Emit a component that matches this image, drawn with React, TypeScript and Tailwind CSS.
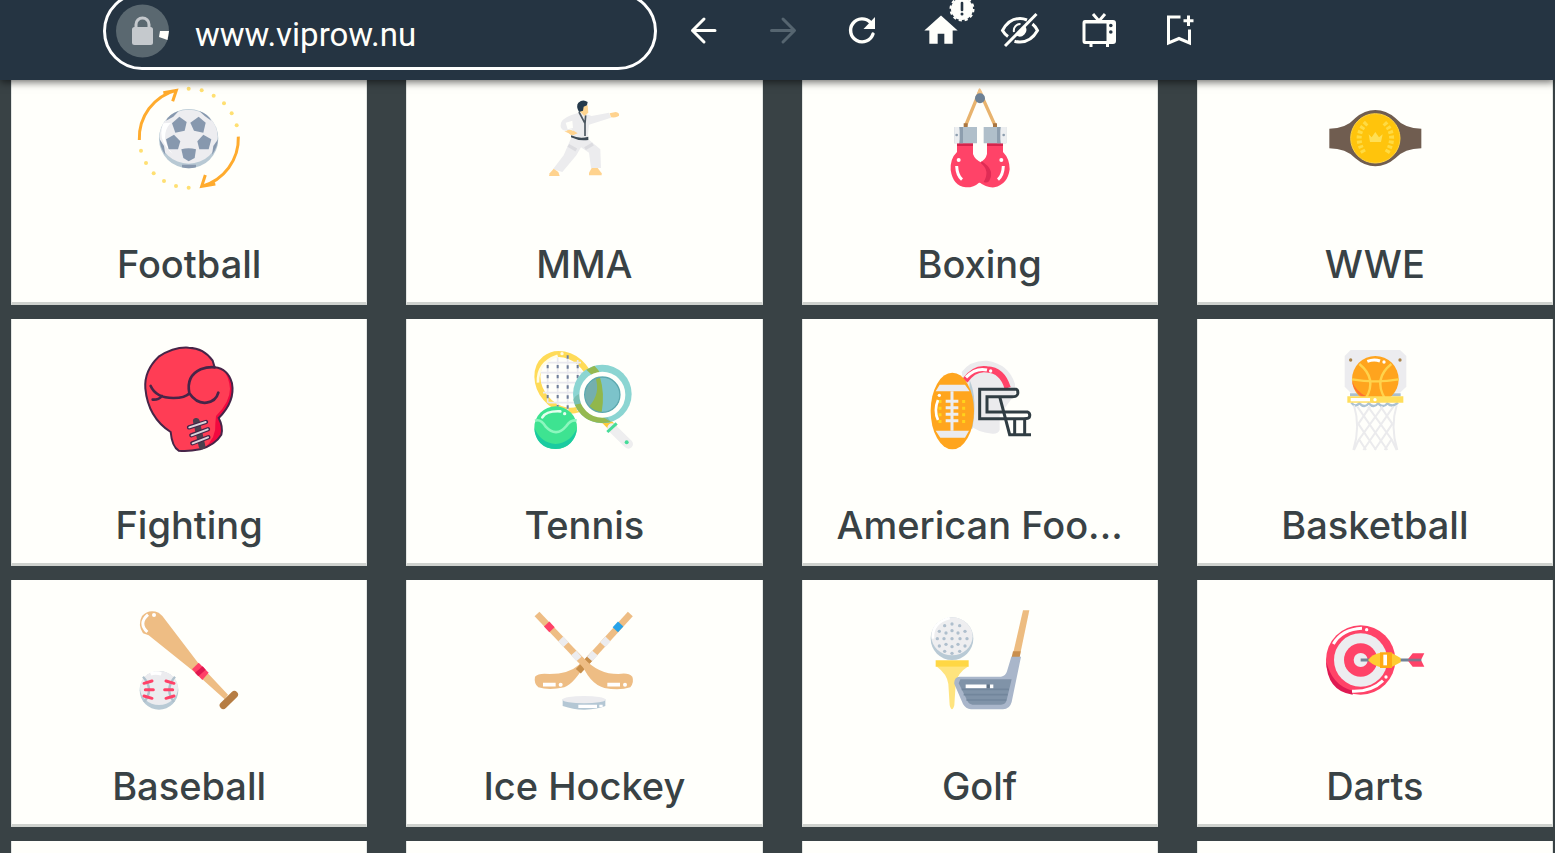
import type { ReactNode } from "react";

type Sport = {
  name: string;
  viewBox: string;
  art: ReactNode;
};

const footballArt = (
  <>
    <path d="M34 180A148 148 0 0 1 144 31M106 38L145 31L134 64" fill="none" stroke="#ffab2d" strokeWidth="9" />
    <path d="M331 170A149 149 0 0 1 221 319M262 312L221 319L232 285" fill="none" stroke="#ffab2d" strokeWidth="9" />
    <g fill="#ffe072">
      <circle cx="182" cy="26" r="6" />
      <circle cx="221" cy="31" r="6" />
      <circle cx="257" cy="47" r="6" />
      <circle cx="288" cy="70" r="6" />
      <circle cx="311" cy="100" r="6" />
      <circle cx="326" cy="136" r="6" />
      <circle cx="182" cy="323" r="6" />
      <circle cx="144" cy="318" r="6" />
      <circle cx="108" cy="303" r="6" />
      <circle cx="77" cy="280" r="6" />
      <circle cx="54" cy="249" r="6" />
      <circle cx="39" cy="212" r="6" />
    </g>
    <circle cx="182" cy="176" r="89" fill="#b8c9d4" />
    <ellipse cx="182" cy="170" rx="87" ry="81" fill="#ededf0" />
    <path d="M106 130Q94 160 106 186Q120 210 134 222Q106 190 112 160Q116 138 130 128Z" fill="#fff" />
    <g fill="#8798ae">
      <path d="M154 110L176 126L170 152L142 158L132 130Z" />
      <path d="M212 110L233 128L226 158L198 152L187 128Z" />
      <path d="M114 178L138 164L157 184L150 208L122 208Z" />
      <path d="M250 178L226 164L208 184L214 208L242 208Z" />
      <path d="M160 208Q182 202 204 208L200 234L182 244L166 234Z" />
      <path d="M114 122Q124 102 152 93L136 110Z" />
      <path d="M214 93Q240 102 250 122L230 108Z" />
      <path d="M95 178Q96 204 112 224L108 198Z" />
      <path d="M270 178Q268 204 252 224L256 198Z" />
      <path d="M162 254H204V262Q182 268 162 262Z" />
    </g>
  </>
);

const mmaArt = (
  <>
    <path d="M126 148L158 152L160 166L140 164Z" fill="#ffd590" />
    <path d="M166 98L186 102L204 108L256 98L262 113L196 134L192 174L146 170L144 148L126 152Q106 150 112 128Q118 110 166 98Z" fill="#ececee" />
    <path d="M126 128L132 148L148 144L146 122Z" fill="#fffffb" />
    <path d="M122 154L150 152L162 160L148 166Z" fill="#ffd38e" />
    <path d="M258 100L276 96Q288 98 286 106Q282 114 262 112Z" fill="#ffd38e" />
    <path d="M144 170L192 176L230 208L232 264H202L196 218L172 202L158 226L116 276L88 268L120 226Z" fill="#ececee" />
    <path d="M134 196L158 210M184 206L208 192" stroke="#dcdce0" strokeWidth="10" />
    <path d="M142 166Q168 178 194 170V180Q166 184 142 172Z" fill="#3d4a55" />
    <path d="M166 96L184 130V168M186 106L184 130" fill="none" stroke="#4c5760" strokeWidth="5" />
    <path d="M172 80L192 76L194 98L182 108L168 94Z" fill="#ffd590" />
    <path d="M166 96Q156 78 164 68Q178 56 192 66L190 76L180 80L178 92Z" fill="#253a4b" />
    <path d="M90 266L104 276L108 288H76L78 280Z" fill="#ffd38e" />
    <path d="M204 264H222L234 280V286H196V278Z" fill="#ffd38e" />
  </>
);

const boxingArt = (
  <>
    <path d="M142 136L184 34L230 136" fill="none" stroke="#e8b36e" strokeWidth="10" strokeLinejoin="round" />
    <path d="M180 40L184 28L190 40Z" fill="#f0c186" stroke="#f0c186" strokeWidth="6" strokeLinejoin="round" />
    <circle cx="185" cy="55" r="15" fill="#6d8196" />
    <path d="M136 130H148V144H136ZM224 130H236V144H224Z" fill="#a97642" />
    <path d="M254 190H206V222Q202 240 184 248L182 306Q204 324 228 322Q268 314 274 268Q274 236 254 216Z" fill="#ff4368" />
    <path d="M116 190H164V222Q170 240 190 248Q216 270 200 304Q190 308 182 308Q166 323 142 322Q104 318 97 270Q95 236 116 216Z" fill="#ff4368" />
    <path d="M190 244Q232 270 212 304Q206 310 196 306Q216 272 188 250Z" fill="#df2c55" />
    <path d="M116 190H164V198H116ZM206 190H254V198H206Z" fill="#d4254c" />
    <path d="M108 141H176V190H108ZM196 141H264V190H196Z" fill="#b0bfca" />
    <path d="M108 141H122L128 165L122 190H108ZM264 141H248L242 165L248 190H264Z" fill="#eceef0" />
    <path d="M124 141H134V190H124ZM236 141H246V190H236Z" fill="#8d9eae" />
    <circle cx="115" cy="165" r="4" fill="#8d9eae" />
    <circle cx="256" cy="165" r="4" fill="#8d9eae" />
    <path d="M115 258Q116 286 131 299M255 258Q254 286 239 299" fill="none" stroke="#fff" strokeWidth="9" />
    <circle cx="121" cy="240" r="6" fill="#fff" />
    <circle cx="249" cy="240" r="6" fill="#fff" />
  </>
);

const wweArt = (
  <>
    <path d="M46 146Q96 146 124 114Q152 90 184 90Q216 90 244 114Q272 146 322 146V205Q272 205 244 235Q216 259 184 259Q152 259 124 235Q96 205 46 205Z" fill="#705d50" />
    <circle cx="184" cy="175" r="74" fill="#ffc40c" stroke="#ffd33f" strokeWidth="3" />
    <path d="M164 163L173 172L184 156L195 172L206 163L201 186H168Z" fill="#ffdf55" />
    <path d="M158 128Q116 168 152 222M211 128Q252 168 216 222" fill="none" stroke="#ffdb43" strokeWidth="15" strokeDasharray="9 6" />
  </>
);

const fightingArt = (
  <>
    <path d="M52 145Q48 92 92 50Q138 20 182 23Q228 24 254 62L260 82Q300 86 312 130Q322 184 272 234Q286 260 280 284Q262 314 216 328Q178 336 152 332Q132 320 128 276Q60 232 52 145Z" fill="#ff3d55" />
    <path d="M284 86Q316 112 312 164Q306 204 272 234Q286 260 280 284Q262 314 228 326Q266 292 262 250L264 228Q306 186 306 146Q304 112 284 86Z" fill="#f2093f" />
    <path d="M52 145Q48 92 92 50Q138 20 182 23Q228 24 254 62L260 82Q300 86 312 130Q322 184 272 234Q286 260 280 284Q262 314 216 328Q178 336 152 332Q132 320 128 276Q60 232 52 145Z" fill="none" stroke="#472548" strokeWidth="6" />
    <path d="M68 138Q84 174 136 174Q172 174 184 160Q174 108 218 88Q240 80 260 82M184 160Q206 192 236 188Q264 184 271 158M74 179Q92 180 102 168" fill="none" stroke="#472548" strokeWidth="8" strokeLinecap="round" />
    <path d="M205 244L222 318" stroke="#4b3f4e" strokeWidth="20" strokeLinecap="round" />
    <path d="M183 262L234 246M190 286L240 268M193 310L241 292" stroke="#472548" strokeWidth="13" strokeLinecap="round" />
    <path d="M184 262L233 246M191 286L239 268M194 310L240 292" stroke="#dad5da" strokeWidth="6" strokeLinecap="round" />
  </>
);

const tennisArt = (
  <>
    <ellipse cx="1311" cy="127" rx="74" ry="92" fill="none" stroke="#ffdb57" strokeWidth="18" transform="rotate(-40 1311 127)" />
    <path d="M1256 68H1360M1238 98H1380M1240 128H1390M1246 158H1394M1262 188H1380M1260 72V188M1290 52V206M1320 48V212M1350 60V212M1380 90V200" stroke="#e9e9ee" strokeWidth="5" />
    <path d="M1260 75V180M1290 75V200M1320 46V206M1350 75V200M1380 105V180" stroke="#6d7d9a" strokeWidth="6" strokeDasharray="10 20" />
    <path d="M1231 128Q1228 68 1290 47" fill="none" stroke="#fffce6" strokeWidth="8" />
    <circle cx="1303" cy="41" r="5" fill="#fffce6" />
    <path d="M1430 238L1460 268" stroke="#ffca38" strokeWidth="24" />
    <path d="M1453 264L1502 312" stroke="#eeeeef" strokeWidth="28" strokeLinecap="round" />
    <path d="M1439 276L1467 250" stroke="#45dc98" strokeWidth="9" />
    <circle cx="1497" cy="307" r="6" fill="#45dc98" />
    <circle cx="1424" cy="162" r="88" fill="#8bd5d2" />
    <path d="M1388 83Q1432 130 1420 200Q1430 220 1450 246Q1416 254 1380 238Q1342 210 1337 180Q1342 160 1390 150Q1406 110 1388 83Z" fill="#79c0b4" />
    <path d="M1376 89L1400 77Q1414 90 1420 104H1392ZM1342 194L1362 190Q1380 226 1424 230L1450 246L1422 249Q1364 246 1342 194Z" fill="#95b950" />
    <circle cx="1424" cy="164" r="54" fill="#7cc3ca" />
    <path d="M1376 142Q1390 130 1398 118L1412 111L1410 200L1400 212Q1364 190 1376 142Z" fill="#74afae" />
    <path d="M1403 112H1417Q1432 160 1422 217H1400L1384 200Q1420 160 1403 112Z" fill="#91b74b" />
    <circle cx="1424" cy="164" r="53" fill="none" stroke="#5da7ae" strokeWidth="4" />
    <circle cx="1424" cy="164" r="62" fill="none" stroke="#fffffb" strokeWidth="14" />
    <circle cx="1284" cy="263" r="64" fill="#3ee391" />
    <path d="M1220 263Q1224 324 1284 327Q1340 324 1348 264Q1330 308 1284 312Q1238 308 1220 263Z" fill="#1bcba0" />
    <path d="M1222 242Q1240 236 1254 260Q1286 294 1316 258Q1330 238 1347 242" fill="none" stroke="#8cf7be" strokeWidth="8" />
    <path d="M1244 232Q1256 212 1298 214" fill="none" stroke="#e5ffef" strokeWidth="8" strokeLinecap="round" />
    <circle cx="1311" cy="221" r="5" fill="#e5ffef" />
  </>
);

const americanFootballArt = (
  <>
    <path d="M130 96Q156 60 206 62Q272 72 290 132V162L244 226V270Q240 282 222 281Q174 276 156 256Z" fill="#ebebed" />
    <path d="M140 122Q168 82 206 88Q252 90 268 144" fill="none" stroke="#ff4368" strokeWidth="19" />
    <path d="M143 112Q172 82 206 90" fill="none" stroke="#fff" strokeWidth="9" />
    <circle cx="217" cy="93" r="5" fill="#fff" />
    <path d="M154 120Q178 176 162 266L150 266Z" fill="#b9cbd5" />
    <ellipse cx="102" cy="213" rx="65" ry="115" fill="#ffa51e" />
    <path d="M64 134H140L154 154H52ZM52 272H152L140 293H66Z" fill="#ebebef" />
    <path d="M101 154V272M82 184H120M82 203H120M82 223H120M82 242H120" stroke="#ededf0" strokeWidth="9" />
    <path d="M65 180V250M136 180V250" stroke="#ffd31c" strokeWidth="9" strokeDasharray="9 11" />
    <path d="M59 180Q46 212 59 240" fill="none" stroke="#fff" strokeWidth="8" />
    <circle cx="63" cy="166" r="5" fill="#fff" />
    <path d="M184 148H294Q300 150 298 162Q296 170 282 170H206V216H328Q337 220 333 232Q330 236 316 236H184Z" fill="none" stroke="#303d43" strokeWidth="9" />
    <path d="M244 170L274 284H338M289 238V280M319 238V280" fill="none" stroke="#303d43" strokeWidth="9" />
  </>
);

const basketballArt = (
  <>
    <path d="M1298 30H1446L1465 48V140L1446 158H1298L1280 140V48Z" fill="#ececef" />
    <circle cx="1298" cy="60" r="5" fill="#a8834b" />
    <circle cx="1446" cy="60" r="5" fill="#a8834b" />
    <path d="M1296 164H1448" stroke="#aabfce" strokeWidth="9" />
    <circle cx="1372" cy="118" r="70" fill="#ffa41e" />
    <path d="M1302 122Q1306 154 1334 172H1350Q1312 154 1302 122Z" fill="#ff7033" />
    <path d="M1302 118Q1372 130 1442 118M1324 72Q1378 116 1344 174M1420 72Q1366 116 1400 174" fill="none" stroke="#ffd34c" strokeWidth="7" />
    <path d="M1348 64Q1368 56 1386 63" fill="none" stroke="#fff" strokeWidth="9" />
    <circle cx="1398" cy="66" r="5" fill="#fff" />
    <path d="M1300 188Q1312 204 1324 190Q1340 206 1352 190Q1368 206 1380 190Q1396 206 1408 190Q1424 204 1440 188" fill="none" stroke="#acc2d2" strokeWidth="7" />
    <path d="M1288 169H1456V188H1288Z" fill="#ffde5c" />
    <path d="M1298 179H1356" stroke="#fff" strokeWidth="10" />
    <circle cx="1371" cy="179" r="5" fill="#fff" />
    <path d="M1308 196Q1328 262 1306 330M1436 196Q1416 262 1438 330M1318 200L1408 330M1350 200L1422 300L1436 330M1388 200L1422 250M1426 200L1336 330M1394 200L1322 300L1308 330M1356 200L1322 250M1320 250L1374 330M1424 250L1370 330M1322 296L1344 330M1422 296L1400 330" fill="none" stroke="#ebebed" strokeWidth="6" />
  </>
);

const baseballArt = (
  <>
    <path d="M45 100Q28 74 42 48Q62 26 92 38Q106 48 114 62L210 188L300 284L290 298L192 210L62 106Z" fill="#eebd84" />
    <path d="M58 96Q30 70 60 44" fill="none" stroke="#fff" strokeWidth="9" />
    <circle cx="78" cy="45" r="6" fill="#fff" />
    <path d="M192 208L212 188L242 218L223 240Z" fill="#ff4168" />
    <path d="M201 218L224 199L233 209L211 229Z" fill="#e01850" />
    <path d="M286 316L319 284" stroke="#b67d43" strokeWidth="22" strokeLinecap="round" />
    <circle cx="93" cy="271" r="58" fill="#b8cad5" />
    <ellipse cx="93" cy="264" rx="57" ry="51" fill="#ececef" />
    <path d="M45 230Q80 268 48 306M141 230Q108 268 138 306" fill="none" stroke="#b0c1cc" strokeWidth="7" />
    <path d="M68 222Q82 216 100 222" fill="none" stroke="#fff" strokeWidth="10" />
    <path d="M48 250L72 243M52 269H76M48 288L72 295M138 250L114 243M134 269H110M138 288L114 295" stroke="#ff4168" strokeWidth="9" strokeLinecap="round" />
  </>
);

const iceHockeyArt = (
  <>
    <path d="M1508 42L1382 178Q1340 252 1310 262Q1264 272 1232 262Q1218 250 1222 230Q1232 218 1266 222Q1324 222 1352 196L1380 170" fill="#eebd84" />
    <path d="M1508 42L1366 198" stroke="#eebd84" strokeWidth="20" />
    <path d="M1390 172L1352 214" stroke="#c78e4a" strokeWidth="20" />
    <path d="M1228 42L1356 178Q1384 252 1430 264Q1476 272 1508 262Q1520 246 1514 230Q1502 216 1472 222Q1412 222 1370 176Z" fill="#eebd84" />
    <path d="M1228 42L1380 202" stroke="#eebd84" strokeWidth="20" />
    <path d="M1257 72L1273 89" stroke="#ff4168" strokeWidth="22" />
    <path d="M1479 72L1463 89" stroke="#28a3e8" strokeWidth="22" />
    <path d="M1299 117L1315 134M1338 159L1354 177M1441 117L1425 134M1402 159L1386 177" stroke="#ececef" strokeWidth="21" />
    <path d="M1246 254H1284M1439 254H1477" stroke="#fff" strokeWidth="11" />
    <circle cx="1299" cy="254" r="6" fill="#fff" />
    <circle cx="1492" cy="254" r="6" fill="#fff" />
    <path d="M1305 298V318Q1340 330 1372 329Q1410 328 1433 318V298Z" fill="#b4c7d4" />
    <ellipse cx="1369" cy="299" rx="64" ry="11" fill="#ececef" />
    <path d="M1352 319H1408M1420 314V322" stroke="#fff" strokeWidth="10" />
  </>
);

const golfArt = (
  <>
    <path d="M54 199H150Q116 220 112 252L108 316Q101 340 94 316L90 252Q86 222 54 199Z" fill="#ffe47e" />
    <path d="M52 181H151V200H52Z" fill="#ffd744" />
    <circle cx="101" cy="116" r="64" fill="#b9cad5" />
    <ellipse cx="101" cy="109" rx="62" ry="57" fill="#eeeef0" />
    <path d="M44 116Q40 68 94 54" fill="none" stroke="#fff" strokeWidth="8" />
    <g fill="#afbfcd">
      <circle cx="101" cy="72" r="5" />
      <circle cx="79" cy="77" r="5" />
      <circle cx="124" cy="77" r="5" />
      <circle cx="63" cy="94" r="5" />
      <circle cx="101" cy="92" r="5" />
      <circle cx="140" cy="94" r="5" />
      <circle cx="83" cy="99" r="5" />
      <circle cx="119" cy="99" r="5" />
      <circle cx="57" cy="116" r="5" />
      <circle cx="77" cy="116" r="5" />
      <circle cx="101" cy="116" r="5" />
      <circle cx="125" cy="116" r="5" />
      <circle cx="146" cy="116" r="5" />
      <circle cx="83" cy="133" r="5" />
      <circle cx="119" cy="133" r="5" />
      <circle cx="63" cy="138" r="5" />
      <circle cx="101" cy="140" r="5" />
      <circle cx="140" cy="138" r="5" />
      <circle cx="79" cy="154" r="5" />
      <circle cx="124" cy="154" r="5" />
      <circle cx="101" cy="160" r="5" />
    </g>
    <path d="M314 31H333L304 170H282Z" fill="#edbc80" />
    <path d="M284 154H307L304 172H280Z" fill="#c98f4e" />
    <path d="M279 170H308L280 306Q274 328 254 328H158Q142 326 134 312L108 252Q106 232 124 230H248Q262 228 266 214Z" fill="#a9b6ca" />
    <path d="M126 238H280L265 300Q262 314 248 314H162Q150 312 146 300L121 250Z" fill="#8093a8" />
    <path d="M130 268H272M136 284H268M144 300H264" stroke="#72869c" strokeWidth="5" />
    <path d="M142 259H204" stroke="#fff" strokeWidth="11" />
    <path d="M206 259H214" stroke="#5e7082" strokeWidth="11" />
    <path d="M215 259H225" stroke="#fff" strokeWidth="11" />
  </>
);

const dartsArt = (
  <>
    <circle cx="1328" cy="180" r="104" fill="#ff4368" />
    <path d="M1224 180Q1226 274 1304 284V272Q1240 256 1224 180Z" fill="#df1a52" />
    <circle cx="1328" cy="180" r="80" fill="#ededf0" />
    <circle cx="1328" cy="180" r="50" fill="#ff4368" />
    <circle cx="1328" cy="180" r="21" fill="#ededf0" />
    <path d="M1246 132Q1272 88 1332 85M1302 274Q1360 276 1395 242" fill="none" stroke="#fff" strokeWidth="9" />
    <circle cx="1346" cy="89" r="5" fill="#fff" />
    <circle cx="1404" cy="231" r="5" fill="#fff" />
    <path d="M1328 180H1482" stroke="#718195" strokeWidth="9" />
    <path d="M1470 178L1484 160H1519L1510 178ZM1470 182L1484 200H1519L1510 182Z" fill="#ff4368" />
    <path d="M1474 180H1510" stroke="#83768c" strokeWidth="8" />
    <path d="M1350 180Q1362 162 1388 158H1420L1448 174V187L1420 202H1388Q1362 196 1350 180Z" fill="#ffcc32" />
    <path d="M1386 157H1422V204H1386Z" fill="#ffaa14" />
    <path d="M1396 164H1407V196H1396Z" fill="#fff" />
  </>
);

const SPORTS: Sport[] = [
  { name: "Football", viewBox: "33 27 300 300", art: footballArt },
  { name: "MMA", viewBox: "31 27 300 300", art: mmaArt },
  { name: "Boxing", viewBox: "35 27 300 300", art: boxingArt },
  { name: "WWE", viewBox: "33 27 300 300", art: wweArt },
  { name: "Fighting", viewBox: "33 30 300 300", art: fightingArt },
  { name: "Tennis", viewBox: "1219 30 300 300", art: tennisArt },
  { name: "American Foo...", viewBox: "35 30 300 300", art: americanFootballArt },
  { name: "Basketball", viewBox: "1221 30 300 300", art: basketballArt },
  { name: "Baseball", viewBox: "33 33 300 300", art: baseballArt },
  { name: "Ice Hockey", viewBox: "1219 33 300 300", art: iceHockeyArt },
  { name: "Golf", viewBox: "35 33 300 300", art: golfArt },
  { name: "Darts", viewBox: "1221 33 300 300", art: dartsArt },
];

const CARD =
  "block h-[247px] border-x border-b-[3px] border-x-[#e3e6e3] border-b-[#cfd2ce] bg-[#fffffb]";

function NavButton({ label, disabled, children }: { label: string; disabled?: boolean; children: ReactNode }) {
  return (
    <button type="button" aria-label={label} disabled={disabled} className="relative size-10 shrink-0">
      {children}
    </button>
  );
}

function Toolbar() {
  return (
    <header className="relative z-10 flex h-20 items-start bg-[#253442] text-[#fffffb] shadow-[0_2px_8px_rgba(0,0,0,0.6)]">
      <div className="-mt-2 ml-[103px] flex h-[78px] w-[554px] shrink-0 items-center rounded-full border-[3px] border-white pl-[10px]">
        <svg viewBox="0 0 54 54" className="size-[54px] shrink-0">
          <circle cx="26.500" cy="27" r="26.500" fill="#5a6870" />
          <path d="M20 25V20.500A6.500 6.500 0 0 1 33 20.500V25" fill="none" stroke="#c5c9cd" strokeWidth="3" />
          <rect x="16" y="23" width="21" height="18" rx="2.500" fill="#c5c9cd" />
          <path d="M44 27H53L51.500 36L43 33Z" fill="#fffffb" />
        </svg>
        <input
          type="text"
          aria-label="Address"
          defaultValue="www.viprow.nu"
          className="mt-2 ml-[25px] min-w-0 flex-1 bg-transparent font-[Roboto,sans-serif] text-[33px] leading-10 outline-none"
        />
      </div>
      <nav className="mt-[10px] ml-[27px] flex gap-[39px]">
        <NavButton label="Back">
          <svg viewBox="0 0 40 40" className="size-10" fill="none" stroke="currentColor" strokeWidth="3" strokeLinecap="round" strokeLinejoin="round">
            <path d="M31 20.500H8.500M20 9L8.500 20.500L20 32" />
          </svg>
        </NavButton>
        <NavButton label="Forward" disabled>
          <svg viewBox="0 0 40 40" className="size-10 text-[#566570]" fill="none" stroke="currentColor" strokeWidth="3" strokeLinecap="round" strokeLinejoin="round">
            <path d="M8.500 20.500H31M20 9L31.500 20.500L20 32" />
          </svg>
        </NavButton>
        <NavButton label="Reload">
          <svg viewBox="0 0 40 40" className="size-10">
            <path d="M31 24A11.500 11.500 0 1 1 28.500 12.500" fill="none" stroke="currentColor" strokeWidth="3.400" strokeLinecap="round" />
            <path d="M33 7V19H21.500Z" fill="currentColor" />
          </svg>
        </NavButton>
        <NavButton label="Home">
          <svg viewBox="0 0 24 24" className="size-10" fill="currentColor">
            <path d="M10 20.300v-6h4v6h5v-8h3L12 3.300 2 12.300h3v8z" />
          </svg>
          <svg viewBox="0 0 26 26" className="absolute -top-[14px] left-[28px] size-[26px]">
            <circle cx="13" cy="13" r="11" fill="currentColor" />
            <circle cx="13" cy="13" r="11.500" fill="none" stroke="currentColor" strokeWidth="2" strokeDasharray="3.200 2.820" />
            <path d="M13 7V14" stroke="#253442" strokeWidth="2.600" strokeLinecap="round" />
            <circle cx="13" cy="18" r="1.500" fill="#253442" />
          </svg>
        </NavButton>
        <NavButton label="Incognito">
          <svg viewBox="0 0 40 40" className="size-10" fill="none" stroke="currentColor" strokeWidth="3">
            <path d="M8 26.500Q4.500 24 2.500 20.500Q9 8.500 20 8.500Q23.500 8.500 27 10M32.500 14Q35.500 16.500 37.500 20.500Q31 32 20 32Q17 32 14.500 31.200" />
            <path d="M14 22A6.500 6.500 0 0 1 20.500 14" strokeWidth="2" />
            <path d="M25.500 16.500A6.800 6.800 0 0 1 16.500 25.800Z" fill="currentColor" stroke="none" />
            <path d="M5 36L36.500 4" />
          </svg>
        </NavButton>
        <NavButton label="Cast to TV">
          <svg viewBox="0 0 40 40" className="size-10">
            <path d="M14 4L20 11L26 4" fill="none" stroke="currentColor" strokeWidth="3" />
            <path d="M6 10H34Q37 10 37 13V31Q37 34 34 34H6Q3.500 34 3.500 31V13Q3.500 10 6 10ZM6.500 13.500V31H27.500V13.500Z" fill="currentColor" fillRule="evenodd" />
            <circle cx="31.800" cy="15.500" r="1.800" fill="#253442" />
            <circle cx="31.800" cy="22" r="1.800" fill="#253442" />
            <path d="M12 33V37M28.500 33V37" stroke="currentColor" strokeWidth="3" />
          </svg>
        </NavButton>
        <NavButton label="Add bookmark">
          <svg viewBox="0 0 40 40" className="size-10" fill="none" stroke="currentColor" strokeWidth="3">
            <path d="M22.500 7H10.500V33L21 28.500L31.500 33V19.500" />
            <path d="M30.500 5.500V16M25.500 10.700H35.500" />
          </svg>
        </NavButton>
      </nav>
    </header>
  );
}

export default function App() {
  return (
    <div className="h-screen overflow-hidden bg-[#394245]">
      <Toolbar />
      <main className="-mt-[22px] grid grid-cols-4 gap-x-[39px] gap-y-[14px] pr-[2px] pl-[11px]">
        {SPORTS.map((sport) => (
          <a key={sport.name} href="#" className={CARD}>
            <svg viewBox={sport.viewBox} className="mx-auto mt-[31px] size-[100px] overflow-visible" aria-hidden="true">
              {sport.art}
            </svg>
            <h2 className="mt-[50px] truncate text-center font-[Inter,sans-serif] text-[38px] leading-[50px] font-medium text-[#394245]">
              {sport.name}
            </h2>
          </a>
        ))}
        {/* next row peeks in at the bottom edge */}
        <div className={CARD} />
        <div className={CARD} />
        <div className={CARD} />
        <div className={CARD} />
      </main>
    </div>
  );
}
